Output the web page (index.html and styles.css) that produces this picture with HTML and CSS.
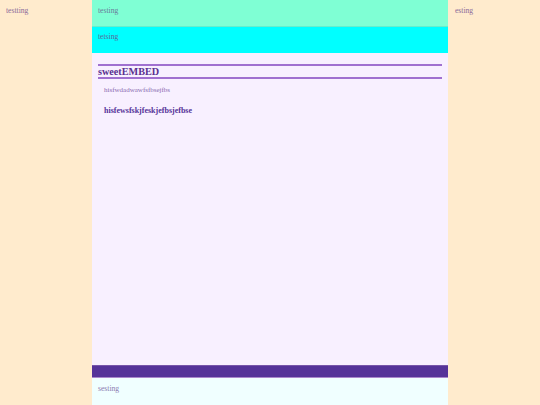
FILE: index.html
```html
<!DOCTYPE html>
<html>
<head>
<meta charset="utf-8">
<link rel="stylesheet" href="styles.css">
</head>
<body>
<div class="page">
  <aside class="side side-left"><span class="side-text">testting</span></aside>
  <div class="center">
    <header class="header">testing</header>
    <nav class="nav">tetsing</nav>
    <main class="main">
      <h2 class="title">sweetEMBED</h2>
      <p class="small">hisfwdadwawfsfbsejfbs</p>
      <p class="bold">hisfewsfskjfeskjefbsjefbse</p>
    </main>
    <div class="bar"></div>
    <footer class="footer">sesting</footer>
  </div>
  <aside class="side side-right"><span class="side-text">esting</span></aside>
</div>
</body>
</html>
```
FILE: styles.css
```css
html, body {
  margin: 0;
  padding: 0;
  height: 100%;
}
body {
  font-family: "Liberation Serif", "DejaVu Serif", serif;
  background: #ffebcd;
}
.page {
  display: grid;
  grid-template-columns: 92px 356px 92px;
  height: 405px;
}
.side {
  background: #ffebcd;
  padding: 6px 6px;
  font-size: 7.6px;
  color: #8a6a9a;
}
.side-right {
  padding-left: 7px;
}
.center {
  display: flex;
  flex-direction: column;
}
.header {
  height: 26px;
  box-sizing: border-box;
  background: #7fffd4;
  padding: 6px 6px;
  font-size: 7.6px;
  color: #6a7a9a;
}
.nav {
  height: 27px;
  box-sizing: border-box;
  background: #00ffff;
  padding: 5px 6px;
  font-size: 7.6px;
  color: #5a6a9a;
  border-top: 1px solid #66eecc;
}
.main {
  flex: 1;
  background: #f8f0ff;
  padding: 11px 6px 0;
}
.title {
  margin: 0;
  font-size: 10.2px;
  font-weight: bold;
  color: #5a3090;
  border-top: 2px solid #a070d0;
  border-bottom: 2px solid #a070d0;
  line-height: 11px;
  padding: 0;
}
.small {
  margin: 7px 0 0 6px;
  font-size: 7px;
  color: #8a6ab0;
}
.bold {
  margin: 12px 0 0 6px;
  font-size: 8px;
  font-weight: bold;
  color: #553399;
}
.bar {
  height: 11px;
  background: #553399;
  border-top: 1px solid #7755aa;
  border-bottom: 1px solid #aa88cc;
}
.footer {
  height: 27px;
  box-sizing: border-box;
  background: #f0ffff;
  padding: 6px 6px;
  font-size: 7.6px;
  color: #8a7ab0;
}
```
